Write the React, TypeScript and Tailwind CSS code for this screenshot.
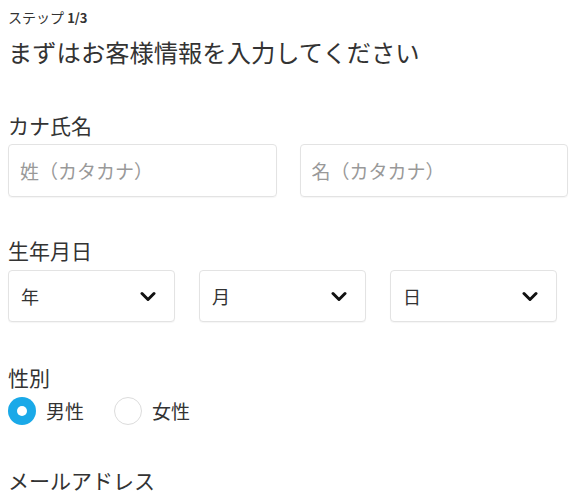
import { useState } from "react";

const FONT = { fontFamily: '"Noto Sans CJK JP", "Noto Sans", sans-serif' };

const Chevron = () => (
  <svg width="16" height="11" viewBox="0 0 16 11" className="shrink-0">
    <polyline points="2,2.5 8,8.5 14,2.5" fill="none" stroke="#111" strokeWidth="3" strokeLinecap="round" strokeLinejoin="round" />
  </svg>
);

const SelectBox = ({ label }: { label: string }) => (
  <div className="w-[167px] h-[52px] border border-[#e3e3e3] rounded-[4px] bg-white flex items-center justify-between pl-3 pr-[18px] shadow-[0_1px_1px_rgba(0,0,0,0.04)]">
    <span className="text-[18px] text-[#333]">{label}</span>
    <Chevron />
  </div>
);

const Radio = ({ checked, label, onClick }: { checked: boolean; label: string; onClick: () => void }) => (
  <button type="button" onClick={onClick} className="flex items-center gap-[10px]">
    {checked ? (
      <span className="w-[28px] h-[28px] rounded-full bg-[#1aa9e8] flex items-center justify-center">
        <span className="w-[10px] h-[10px] rounded-full bg-white" />
      </span>
    ) : (
      <span className="w-[28px] h-[28px] rounded-full border border-[#dcdcdc] bg-white" />
    )}
    <span className="text-[19px] text-[#333]">{label}</span>
  </button>
);

export default function App() {
  const [gender, setGender] = useState("male");

  return (
    <div className="bg-white w-[573px] h-[500px] overflow-hidden pl-2 pt-2 text-[#333]" style={FONT}>
      <p className="text-[14px] leading-[18px] h-[18px]">
        ステップ <span className="font-bold text-[13px] leading-none">1/3</span>
      </p>
      <h1 className="mt-[10px] text-[24.3px] leading-[32px]">まずはお客様情報を入力してください</h1>

      <p className="mt-[43px] text-[21px] leading-[28px]">カナ氏名</p>
      <div className="mt-[5px] flex gap-[23px] pr-[5px]">
        {["姓（カタカナ）", "名（カタカナ）"].map((ph) => (
          <input
            key={ph}
            placeholder={ph}
            className="w-[269px] h-[53px] border border-[#e3e3e3] rounded-[4px] px-[11px] text-[19px] placeholder:text-[#999] outline-none shadow-[0_1px_1px_rgba(0,0,0,0.04)]"
            style={FONT}
          />
        ))}
      </div>

      <p className="mt-[39px] text-[21px] leading-[28px]">生年月日</p>
      <div className="mt-[6px] flex gap-[24px]">
        <SelectBox label="年" />
        <SelectBox label="月" />
        <SelectBox label="日" />
      </div>

      <p className="mt-[41px] text-[21px] leading-[28px]">性別</p>
      <div className="mt-[6px] flex items-center gap-[30px]">
        <Radio checked={gender === "male"} label="男性" onClick={() => setGender("male")} />
        <Radio checked={gender === "female"} label="女性" onClick={() => setGender("female")} />
      </div>

      <p className="mt-[40px] text-[21px] leading-[28px]">メールアドレス</p>
    </div>
  );
}
